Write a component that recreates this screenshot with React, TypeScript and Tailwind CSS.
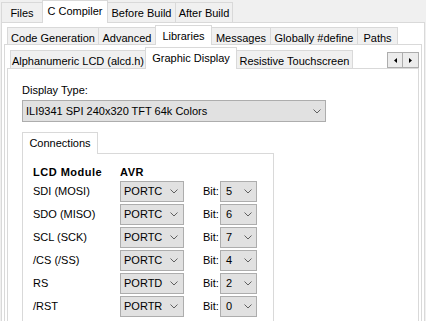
import React from "react";

type TabProps = { label: string; cls: string; sel?: boolean };

function Tab({ label, cls, sel }: TabProps) {
  return (
    <div
      className={`-ml-px first:ml-0 shrink-0 flex justify-center pt-[4px] border-t border-x border-[#d9d9d9] leading-[13px] whitespace-nowrap ${
        sel ? "relative z-10 bg-white" : "border-b bg-[#f0f0f0]"
      } ${cls}`}
    >
      {label}
    </div>
  );
}

function Chevron() {
  return (
    <svg width="8" height="5" viewBox="0 0 8 5" className="shrink-0">
      <path d="M0.5 0.5 L4 4 L7.5 0.5" fill="none" stroke="#606060" strokeWidth="1" />
    </svg>
  );
}

function Combo({ value, cls }: { value: string; cls: string }) {
  return (
    <div
      className={`flex items-center justify-between border border-[#adadad] bg-[#e1e1e1] leading-[13px] shrink-0 ${cls}`}
    >
      <span>{value}</span>
      <Chevron />
    </div>
  );
}

const rows: [string, string, string][] = [
  ["SDI (MOSI)", "PORTC", "5"],
  ["SDO (MISO)", "PORTC", "6"],
  ["SCL (SCK)", "PORTC", "7"],
  ["/CS (/SS)", "PORTC", "4"],
  ["RS", "PORTD", "2"],
  ["/RST", "PORTR", "0"],
];

export default function App() {
  return (
    <div className="w-[426px] h-[321px] overflow-hidden bg-[#f0f0f0] text-[11px] text-black font-['Liberation_Sans',Arial,sans-serif]">
      {/* Top tab strip */}
      <div className="flex items-end h-[23px] pl-[1px] relative z-10">
        <Tab label="Files" cls="w-[42px] h-[21px]" />
        <Tab label="C Compiler" cls="w-[66px] h-[23px]" sel />
        <Tab label="Before Build" cls="w-[69px] h-[21px]" />
        <Tab label="After Build" cls="w-[58px] h-[21px]" />
      </div>

      {/* Panel 1 */}
      <div className="-mt-px ml-[1px] w-[424px] h-[400px] border border-[#d9d9d9] bg-white px-[2px] pt-[2px]">
        <div className="flex items-end h-[20px] pl-[3px] relative z-10">
          <Tab label="Code Generation" cls="w-[92px] h-[18px] pt-[3px]" />
          <Tab label="Advanced" cls="w-[58px] h-[18px] pt-[3px]" />
          <Tab label="Libraries" cls="w-[57px] h-[20px] pt-[3px]" sel />
          <Tab label="Messages" cls="w-[60px] h-[18px] pt-[3px]" />
          <Tab label="Globally #define" cls="w-[88px] h-[18px] pt-[3px]" />
          <Tab label="Paths" cls="w-[41px] h-[18px] pt-[3px]" />
        </div>

        {/* Panel 2 */}
        <div className="-mt-px h-[400px] border border-[#d9d9d9] bg-white px-[2px] pt-[2px]">
          <div className="flex items-end h-[22px] pl-[3px] relative z-10">
            <Tab label="Alphanumeric LCD (alcd.h)" cls="w-[136px] h-[19px] pt-[3px]" />
            <Tab label="Graphic Display" cls="w-[92px] h-[22px] pt-[4px]" sel />
            <Tab label="Resistive Touchscreen" cls="w-[117px] h-[19px] pt-[3px]" />
            <div className="ml-auto self-start mt-[5px] flex">
              <div className="w-[16px] h-[16px] border border-[#adadad] bg-[#ececec] flex items-center justify-center">
                <svg width="3" height="5" viewBox="0 0 3 5">
                  <path d="M3 0 L0 2.5 L3 5 Z" fill="#000" />
                </svg>
              </div>
              <div className="-ml-px w-[17px] h-[16px] border border-[#adadad] bg-[#ececec] flex items-center justify-center">
                <svg width="3" height="5" viewBox="0 0 3 5">
                  <path d="M0 0 L3 2.5 L0 5 Z" fill="#000" />
                </svg>
              </div>
            </div>
          </div>

          {/* Panel 3 */}
          <div className="-mt-px h-[400px] border border-[#d9d9d9] bg-white pl-[14px] pt-[15px]">
            <div className="leading-[13px]">Display Type:</div>
            <Combo value="ILI9341 SPI 240x320 TFT 64k Colors" cls="mt-[3px] w-[304px] h-[22px] pl-[3px] pr-[4px]" />

            <div className="mt-[10px] flex relative z-10">
              <Tab label="Connections" cls="w-[76px] h-[22px]" sel />
            </div>
            <div className="-mt-px w-[252px] h-[300px] border border-[#d9d9d9] bg-white pl-[10px] pt-[12px]">
              <div className="flex font-bold leading-[13px]">
                <div className="w-[87px] tracking-[0.5px]">LCD Module</div>
                <div className="tracking-[0.5px]">AVR</div>
              </div>
              <div className="mt-[2px] flex flex-col gap-[2px]">
                {rows.map(([label, port, bit]) => (
                  <div key={label} className="flex items-center h-[21px]">
                    <div className="w-[87px] leading-[13px]">{label}</div>
                    <Combo value={port} cls="w-[64px] h-[21px] pl-[3px] pr-[5px]" />
                    <div className="ml-[19px] w-[17px] leading-[13px]">Bit:</div>
                    <Combo value={bit} cls="w-[37px] h-[21px] pl-[5px] pr-[4px]" />
                  </div>
                ))}
              </div>
            </div>
          </div>
        </div>
      </div>
    </div>
  );
}
